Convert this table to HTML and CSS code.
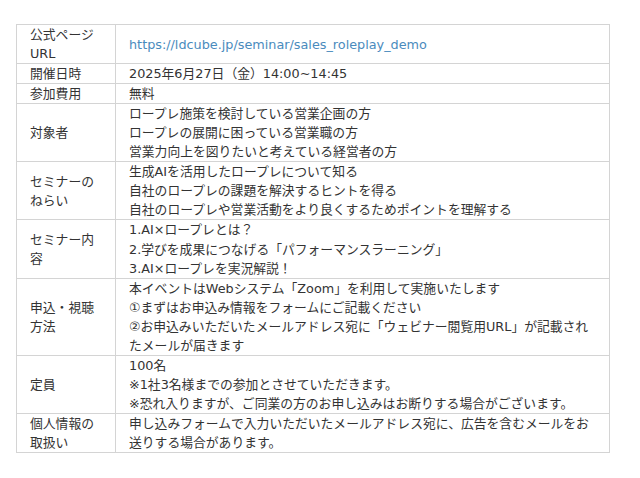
FILE: index.html
```html
<!DOCTYPE html>
<html lang="ja">
<head>
<meta charset="utf-8">
<link rel="stylesheet" href="styles.css">
</head>
<body>
<table class="info">
<colgroup><col class="c-label"><col class="c-value"></colgroup>
<tr><th>公式ページURL</th><td><a href="#">https://ldcube.jp/seminar/sales_roleplay_demo</a></td></tr>
<tr><th>開催日時</th><td>2025年6月27日（金）14:00~14:45</td></tr>
<tr><th>参加費用</th><td>無料</td></tr>
<tr><th>対象者</th><td>ロープレ施策を検討している営業企画の方<br>ロープレの展開に困っている営業職の方<br>営業力向上を図りたいと考えている経営者の方</td></tr>
<tr><th>セミナーのねらい</th><td>生成AIを活用したロープレについて知る<br>自社のロープレの課題を解決するヒントを得る<br>自社のロープレや営業活動をより良くするためポイントを理解する</td></tr>
<tr><th>セミナー内容</th><td>1.AI×ロープレとは？<br>2.学びを成果につなげる「パフォーマンスラーニング」<br>3.AI×ロープレを実況解説！</td></tr>
<tr><th>申込・視聴方法</th><td>本イベントはWebシステム「Zoom」を利用して実施いたします<br>①まずはお申込み情報をフォームにご記載ください<br>②お申込みいただいたメールアドレス宛に「ウェビナー閲覧用URL」が記載されたメールが届きます</td></tr>
<tr><th>定員</th><td>100名<br>※1社3名様までの参加とさせていただきます。<br>※恐れ入りますが、ご同業の方のお申し込みはお断りする場合がございます。</td></tr>
<tr><th>個人情報の取扱い</th><td>申し込みフォームで入力いただいたメールアドレス宛に、広告を含むメールをお送りする場合があります。</td></tr>
</table>
</body>
</html>
```
FILE: styles.css
```css
html, body {
  margin: 0;
  background: #fff;
}
body {
  padding: 24px 0 0 16px;
  font-family: "DejaVu Sans", "Noto Sans CJK JP", sans-serif;
  font-size: 12.8px;
  line-height: 19.05px;
  color: #333;
}
.info {
  border-collapse: collapse;
  width: 594px;
  table-layout: fixed;
}
.c-label { width: 99px; }
.info th, .info td {
  border: 1px solid #d4d4d4;
  padding: 0 12px 0 13px;
  vertical-align: middle;
  text-align: left;
  font-weight: normal;
}
.info td {
  padding-left: 13px;
  padding-right: 16px;
}
.info a {
  color: #4a8bbd;
  text-decoration: none;
}
```
